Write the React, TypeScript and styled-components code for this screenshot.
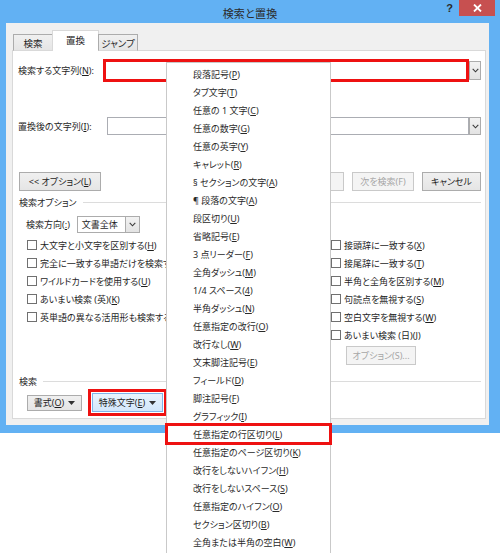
import React from 'react'
import styled, { createGlobalStyle } from 'styled-components'

const GlobalStyle = createGlobalStyle`
  html, body {
    margin: 0;
    padding: 0;
    background: #ffffff;
  }
  body {
    font-family: "Noto Sans", "Noto Sans CJK JP", sans-serif;
    font-size: 9px;
    font-feature-settings: "palt";
    color: #1e1e1e;
  }
  u {
    text-decoration-thickness: 1px;
    text-underline-offset: 1px;
  }
`

const Page = styled.div`
  position: relative;
  width: 500px;
  height: 553px;
  overflow: hidden;
`

const Window = styled.div`
  background: #62b1f3;
  padding-bottom: 8px;
`

const TitleBar = styled.div`
  display: grid;
  grid-template-columns: 1fr auto 1fr;
  height: 23px;
  align-items: center;
`

const Title = styled.div`
  grid-column: 2;
  font-size: 11px;
  color: #2b2b2b;
  padding-top: 2px;
  letter-spacing: 0.2px;
`

const Controls = styled.div`
  grid-column: 3;
  justify-self: end;
  align-self: start;
  display: flex;
  align-items: flex-start;
  gap: 6px;
  margin-right: 5px;
`

const Help = styled.span`
  font-family: "Liberation Sans", sans-serif;
  font-weight: bold;
  font-size: 11px;
  color: #2a2a2a;
  margin-top: 2px;
`

const Close = styled.div`
  width: 36px;
  height: 16px;
  background: #c75050;
  display: flex;
  align-items: center;
  justify-content: center;
`

const Body = styled.div`
  background: #f0f0f0;
  margin: 0 11px 0 6px;
  padding: 7px 3px 6px 6px;
`

const Tabs = styled.div`
  display: flex;
  align-items: flex-end;
  height: 21px;
  padding-left: 1px;
  position: relative;
  z-index: 1;
  margin-bottom: -1px;
`

const Tab = styled.div<{ $active?: boolean; $w: number }>`
  width: ${({ $w }) => $w}px;
  height: ${({ $active }) => ($active ? 21 : 17)}px;
  box-sizing: border-box;
  border: 1px solid ${({ $active }) => ($active ? '#d9d9d9' : '#acacac')};
  border-bottom: ${({ $active }) => ($active ? 'none' : '1px solid #d9d9d9')};
  background: ${({ $active }) => ($active ? '#ffffff' : 'linear-gradient(#f0f0f0, #e5e5e5)')};
  display: flex;
  align-items: center;
  justify-content: center;
  font-size: 9.5px;
  margin-left: ${({ $active }) => ($active ? '-1px' : '0')};
  margin-right: ${({ $active }) => ($active ? '-1px' : '0')};
  padding-bottom: ${({ $active }) => ($active ? '2px' : '0')};
`

const Panel = styled.div`
  background: #ffffff;
  border: 1px solid #d9d9d9;
  height: 369px;
  box-sizing: border-box;
  padding: 4px 4px 0 5px;
`

const FieldRow = styled.div<{ $top: number }>`
  display: flex;
  align-items: center;
  margin-top: ${({ $top }) => $top}px;
`

const Label = styled.div<{ $w?: number }>`
  width: ${({ $w }) => ($w ? `${$w}px` : 'auto')};
  flex-shrink: 0;
  white-space: nowrap;
`

const RedBox = styled.div`
  flex: 1;
  height: 23px;
  box-sizing: border-box;
  border: 3px solid #ee1111;
  background: #ffffff;
`

const TextBox = styled.div`
  flex: 1;
  height: 18px;
  box-sizing: border-box;
  border: 1px solid #abadb3;
  background: #ffffff;
`

const ArrowBox = styled.div<{ $h: number }>`
  width: 12px;
  height: ${({ $h }) => $h}px;
  box-sizing: border-box;
  border: 1px solid #acacac;
  background: linear-gradient(#f2f2f2, #e3e3e3);
  display: flex;
  align-items: center;
  justify-content: center;
`

const ButtonRow = styled.div`
  display: flex;
  align-items: center;
  margin-top: 37px;
  padding-left: 1px;
  gap: 8px;
`

const Spacer = styled.div`
  flex: 1;
`

const Button = styled.div<{ $w: number; $h?: number; $disabled?: boolean }>`
  width: ${({ $w }) => $w}px;
  height: ${({ $h }) => $h ?? 19}px;
  box-sizing: border-box;
  border: 1px solid ${({ $disabled }) => ($disabled ? '#c9c9c9' : '#acacac')};
  background: ${({ $disabled }) => ($disabled ? '#f4f4f4' : 'linear-gradient(#f0f0f0, #e5e5e5)')};
  color: ${({ $disabled }) => ($disabled ? '#a6a6a6' : '#1e1e1e')};
  display: flex;
  align-items: center;
  justify-content: center;
  gap: 4px;
  white-space: nowrap;
  flex-shrink: 0;
`

const HotButton = styled(Button)`
  border-color: #7eb4ea;
  background: linear-gradient(#e8f3fd, #d3e7fb);
`

const RedFrame = styled.div`
  border: 3px solid #ee1111;
  padding: 1px;
`

const GroupHeader = styled.div<{ $top: number }>`
  display: flex;
  align-items: center;
  gap: 6px;
  height: 12px;
  margin-top: ${({ $top }) => $top}px;
  padding-left: 1px;
  &::after {
    content: '';
    flex: 1;
    border-top: 1px solid #dcdcdc;
  }
`

const DirectionRow = styled.div`
  display: flex;
  align-items: center;
  margin-top: 8px;
  padding-left: 8px;
  gap: 7px;
`

const Select = styled.div`
  width: 63px;
  height: 17px;
  box-sizing: border-box;
  border: 1px solid #acacac;
  display: flex;
  align-items: stretch;
  background: #ffffff;
`

const SelectText = styled.div`
  flex: 1;
  padding-left: 4px;
  display: flex;
  align-items: center;
`

const SelectArrow = styled.div`
  width: 13px;
  border-left: 1px solid #acacac;
  background: linear-gradient(#f2f2f2, #e3e3e3);
  display: flex;
  align-items: center;
  justify-content: center;
`

const OptionGrid = styled.div`
  display: grid;
  grid-template-columns: 304px 1fr;
  margin-top: 3px;
  padding-left: 9px;
`

const Column = styled.div`
  display: flex;
  flex-direction: column;
`

const Check = styled.label`
  display: flex;
  align-items: center;
  gap: 3px;
  height: 18px;
  white-space: nowrap;
`

const Box = styled.span`
  width: 10px;
  height: 10px;
  box-sizing: border-box;
  border: 1px solid #707070;
  background: #ffffff;
  flex-shrink: 0;
`

const SubButtonWrap = styled.div`
  margin: 2px 0 0 15px;
`

const BottomRow = styled.div`
  display: flex;
  align-items: center;
  gap: 6px;
  margin-top: 2px;
  padding-left: 9px;
`

const Menu = styled.div`
  position: absolute;
  left: 166px;
  top: 62px;
  width: 165px;
  box-sizing: border-box;
  background: #ffffff;
  border: 1px solid #c9c9c9;
  padding: 2px 0;
  z-index: 5;
`

const MenuItem = styled.div<{ $marked?: boolean }>`
  height: 18px;
  display: flex;
  align-items: center;
  padding-left: 26px;
  white-space: nowrap;
  color: #2a2a2a;
  outline: ${({ $marked }) => ($marked ? '3px solid #ee1111' : 'none')};
  outline-offset: -1px;
`

const Chevron = () => (
  <svg width="7" height="5" viewBox="0 0 7 5">
    <path d="M0.7 0.8 L3.5 3.8 L6.3 0.8" fill="none" stroke="#3a3a3a" strokeWidth="1.1" />
  </svg>
)

const Caret = () => (
  <svg width="7" height="4" viewBox="0 0 7 4">
    <polygon points="0,0 7,0 3.5,4" fill="#333" />
  </svg>
)

// label with an underlined access key, kept in one span so flex gaps don't split it
const Key = ({ text, k, tail }: { text: string; k: string; tail?: string }) => (
  <span>
    {text}(<u>{k}</u>){tail}
  </span>
)

const leftOptions: [string, string][] = [
  ['大文字と小文字を区別する', 'H'],
  ['完全に一致する単語だけを検索する', 'Y'],
  ['ワイルドカードを使用する', 'U'],
  ['あいまい検索 (英)', 'K'],
  ['英単語の異なる活用形も検索する', 'W'],
]

const rightOptions: [string, string][] = [
  ['接頭辞に一致する', 'X'],
  ['接尾辞に一致する', 'T'],
  ['半角と全角を区別する', 'M'],
  ['句読点を無視する', 'S'],
  ['空白文字を無視する', 'W'],
  ['あいまい検索 (日)', 'J'],
]

const specials: [string, string][] = [
  ['段落記号', 'P'],
  ['タブ文字', 'T'],
  ['任意の 1 文字', 'C'],
  ['任意の数字', 'G'],
  ['任意の英字', 'Y'],
  ['キャレット', 'R'],
  ['§ セクションの文字', 'A'],
  ['¶ 段落の文字', 'A'],
  ['段区切り', 'U'],
  ['省略記号', 'E'],
  ['3 点リーダー', 'F'],
  ['全角ダッシュ', 'M'],
  ['1/4 スペース', '4'],
  ['半角ダッシュ', 'N'],
  ['任意指定の改行', 'O'],
  ['改行なし', 'W'],
  ['文末脚注記号', 'E'],
  ['フィールド', 'D'],
  ['脚注記号', 'F'],
  ['グラフィック', 'I'],
  ['任意指定の行区切り', 'L'],
  ['任意指定のページ区切り', 'K'],
  ['改行をしないハイフン', 'H'],
  ['改行をしないスペース', 'S'],
  ['任意指定のハイフン', 'O'],
  ['セクション区切り', 'B'],
  ['全角または半角の空白', 'W'],
]

export default function App() {
  return (
    <Page>
      <GlobalStyle />
      <Window>
        <TitleBar>
          <Title>検索と置換</Title>
          <Controls>
            <Help>?</Help>
            <Close>
              <svg width="9" height="8" viewBox="0 0 9 8">
                <path d="M1 0.5 L8 7.5 M8 0.5 L1 7.5" stroke="#ffffff" strokeWidth="1.8" />
              </svg>
            </Close>
          </Controls>
        </TitleBar>
        <Body>
          <Tabs>
            <Tab $w={40}>検索</Tab>
            <Tab $w={47} $active>置換</Tab>
            <Tab $w={40}>ジャンプ</Tab>
          </Tabs>
          <Panel>
            <FieldRow $top={4}>
              <Label $w={85}>
                <Key text="検索する文字列" k="N" tail=":" />
              </Label>
              <RedBox />
              <ArrowBox $h={19}>
                <Chevron />
              </ArrowBox>
            </FieldRow>
            <FieldRow $top={35}>
              <Label $w={89}>
                <Key text="置換後の文字列" k="I" tail=":" />
              </Label>
              <TextBox />
              <ArrowBox $h={18}>
                <Chevron />
              </ArrowBox>
            </FieldRow>
            <ButtonRow>
              <Button $w={82}>
                <Key text="<< オプション" k="L" />
              </Button>
              <Spacer />
              {/* 置換 / すべて置換: hidden under the open menu */}
              <Button $w={62} $disabled />
              <Button $w={62} $disabled />
              <Button $w={62} $disabled>
                次を検索(F)
              </Button>
              <Button $w={59}>キャンセル</Button>
            </ButtonRow>
            <GroupHeader $top={5}>検索オプション</GroupHeader>
            <DirectionRow>
              <Label>
                <Key text="検索方向" k=":" />
              </Label>
              <Select>
                <SelectText>文書全体</SelectText>
                <SelectArrow>
                  <Chevron />
                </SelectArrow>
              </Select>
            </DirectionRow>
            <OptionGrid>
              <Column>
                {leftOptions.map(([t, k]) => (
                  <Check key={t}>
                    <Box />
                    <Key text={t} k={k} />
                  </Check>
                ))}
              </Column>
              <Column>
                {rightOptions.map(([t, k]) => (
                  <Check key={t}>
                    <Box />
                    <Key text={t} k={k} />
                  </Check>
                ))}
                <SubButtonWrap>
                  <Button $w={70} $disabled>
                    オプション(S)...
                  </Button>
                </SubButtonWrap>
              </Column>
            </OptionGrid>
            <GroupHeader $top={10}>検索</GroupHeader>
            <BottomRow>
              <Button $w={55} $h={16}>
                <Key text="書式" k="O" />
                <Caret />
              </Button>
              <RedFrame>
                <HotButton $w={71}>
                  <Key text="特殊文字" k="E" />
                  <Caret />
                </HotButton>
              </RedFrame>
            </BottomRow>
          </Panel>
        </Body>
      </Window>
      <Menu>
        {specials.map(([t, k], i) => (
          <MenuItem key={i} $marked={i === 20}>
            <Key text={t} k={k} />
          </MenuItem>
        ))}
      </Menu>
    </Page>
  )
}
